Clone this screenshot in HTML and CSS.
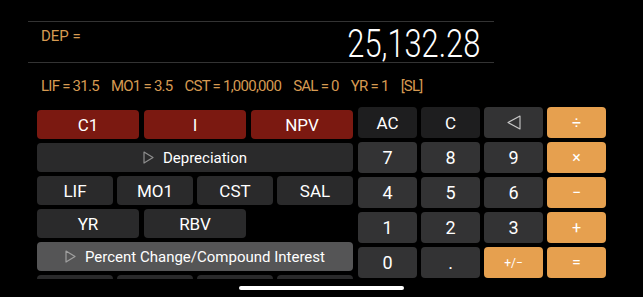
FILE: index.html
```html
<!DOCTYPE html>
<html>
<head>
<meta charset="utf-8">
<link rel="stylesheet" href="styles.css">
</head>
<body>
<div class="screen">
  <div class="display">
    <div class="dep">DEP =</div>
    <div class="big">25,132.28</div>
  </div>
  <div class="info">
    <span>LIF = 31.5</span>
    <span>MO1 = 3.5</span>
    <span>CST = 1,000,000</span>
    <span>SAL = 0</span>
    <span>YR = 1</span>
    <span>[SL]</span>
  </div>
  <div class="pad">
    <div class="left">
      <div class="row three">
        <div class="key red">C1</div>
        <div class="key red">I</div>
        <div class="key red">NPV</div>
      </div>
      <div class="row">
        <div class="key dark wide"><svg class="tri" width="11" height="13" viewBox="0 0 11 13"><path d="M1 1 L10 6.5 L1 12 Z" fill="none" stroke="#8e8e8e" stroke-width="1.2" stroke-linejoin="round"/></svg>Depreciation</div>
      </div>
      <div class="row four">
        <div class="key dark">LIF</div>
        <div class="key dark">MO1</div>
        <div class="key dark">CST</div>
        <div class="key dark">SAL</div>
      </div>
      <div class="row three">
        <div class="key dark">YR</div>
        <div class="key dark">RBV</div>
      </div>
      <div class="row">
        <div class="key grey wide"><svg class="tri" width="11" height="13" viewBox="0 0 11 13"><path d="M1 1 L10 6.5 L1 12 Z" fill="none" stroke="#a0a0a0" stroke-width="1.2" stroke-linejoin="round"/></svg>Percent Change/Compound Interest</div>
      </div>
      <div class="row four">
        <div class="key dark"></div>
        <div class="key dark"></div>
        <div class="key dark"></div>
        <div class="key dark"></div>
      </div>
    </div>
    <div class="right">
      <div class="key black">AC</div>
      <div class="key black">C</div>
      <div class="key num"><svg width="14" height="15" viewBox="0 0 14 15"><path d="M13 1 L1 7.5 L13 14 Z" fill="none" stroke="#c8c8c8" stroke-width="1.1" stroke-linejoin="round"/></svg></div>
      <div class="key op">÷</div>
      <div class="key num digit">7</div>
      <div class="key num digit">8</div>
      <div class="key num digit">9</div>
      <div class="key op">×</div>
      <div class="key num digit">4</div>
      <div class="key num digit">5</div>
      <div class="key num digit">6</div>
      <div class="key op">−</div>
      <div class="key num digit">1</div>
      <div class="key num digit">2</div>
      <div class="key num digit">3</div>
      <div class="key op">+</div>
      <div class="key num digit">0</div>
      <div class="key num digit">.</div>
      <div class="key op small">+/−</div>
      <div class="key op">=</div>
    </div>
  </div>
  <div class="home"></div>
</div>
</body>
</html>
```

FILE: styles.css
```css
html, body {
  margin: 0;
  padding: 0;
  background: #000;
}
.screen {
  width: 643px;
  height: 297px;
  position: relative;
  overflow: hidden;
  font-family: Roboto, "Liberation Sans", sans-serif;
  color: #fff;
}
.display {
  margin: 21px 0 0 28px;
  width: 466px;
  height: 42px;
  box-sizing: border-box;
  border-top: 1px solid #333;
  border-bottom: 1px solid #333;
  display: flex;
  justify-content: space-between;
  padding: 0 14px 0 13px;
}
.dep {
  color: #d69a52;
  font-size: 15px;
  line-height: 18px;
  margin-top: 5px;
}
.big {
  font-size: 39px;
  font-weight: 300;
  line-height: 40px;
  margin-top: 2px;
  transform: scaleX(0.79);
  transform-origin: right center;
}
.info {
  display: flex;
  gap: 12px;
  padding-left: 41px;
  margin-top: 14px;
  color: #d69a52;
  font-size: 15px;
  letter-spacing: -0.75px;
  line-height: 18px;
  height: 18px;
}
.pad {
  display: flex;
  gap: 5px;
  margin-top: 12px;
  margin-left: 37px;
}
.left {
  width: 316px;
  height: 169px;
  margin-top: 3px;
  overflow: hidden;
  display: flex;
  flex-direction: column;
  gap: 4px;
}
.row {
  display: flex;
  gap: 5px;
  height: 29px;
  flex: none;
}
.row.three .key {
  width: 102px;
  flex: none;
}
.row.four {
  gap: 4px;
}
.row.four .key {
  flex: 1;
}
.key {
  border-radius: 4px;
  display: flex;
  align-items: center;
  justify-content: center;
  font-size: 17px;
  color: #fff;
  box-sizing: border-box;
}
.key.wide {
  flex: 1;
  font-size: 15px;
}
.tri {
  margin-right: 9px;
}
.red { background: #7b1911; }
.dark { background: #2a2a2b; }
.grey { background: #555556; }
.right {
  display: grid;
  grid-template-columns: repeat(4, 59px);
  grid-auto-rows: 31px;
  gap: 4px;
}
.black { background: #1e1e1f; }
.num { background: #333334; }
.digit { font-size: 18px; }
.op {
  background: #e6a04f;
  font-size: 16px;
}
.op.small { font-size: 12px; }
.home {
  position: absolute;
  left: 239px;
  top: 286px;
  width: 165px;
  height: 4px;
  border-radius: 2px;
  background: #fff;
}
```
